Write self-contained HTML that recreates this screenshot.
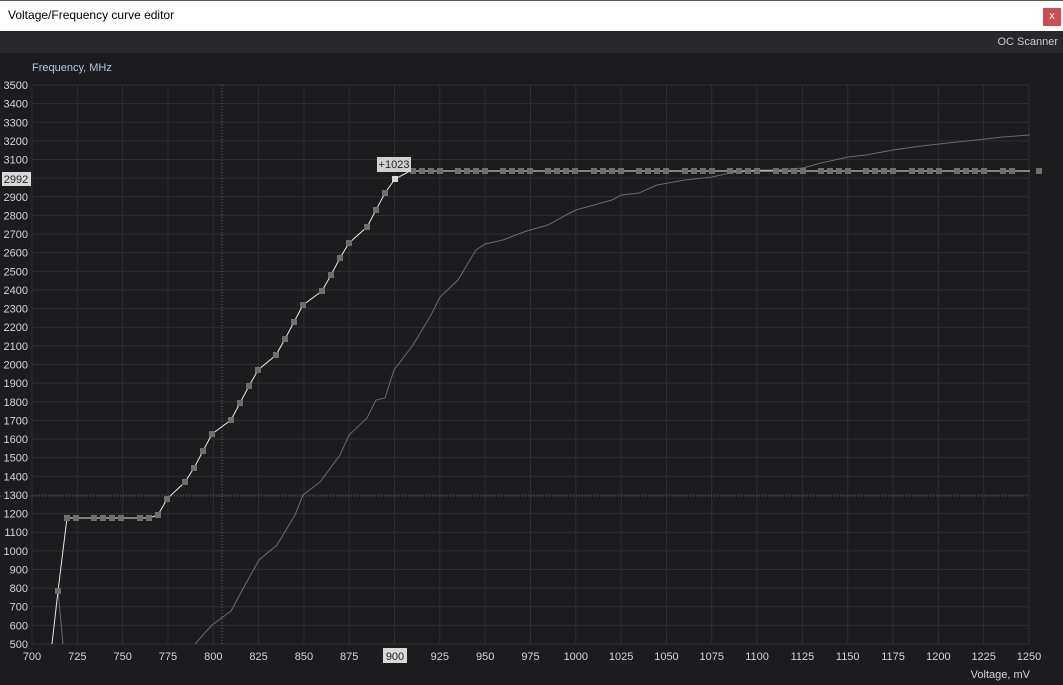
<!DOCTYPE html><html><head><style>
body{margin:0;width:1063px;height:685px;overflow:hidden;background:#1c1c1f;font-family:"Liberation Sans",sans-serif;}
#t{position:absolute;left:0;top:0;width:1063px;height:31px;background:#fff;border-top:1px solid #555;box-sizing:border-box}
#t span{position:absolute;left:8px;top:7px;font-size:12px;color:#000}
#x{position:absolute;right:2px;top:7px;width:18px;height:18px;background:#c85050;color:#fff;font-size:11px;text-align:center;line-height:17px}
#b{position:absolute;left:0;top:31px;width:1063px;height:22px;background:#28282c}
#b span{position:absolute;right:5px;top:5px;font-size:11px;color:#c8ccd4}
svg{position:absolute;left:0;top:53px}
</style></head><body>
<div id="t"><span>Voltage/Frequency curve editor</span><div id="x">x</div></div>
<div id="b"><span>OC Scanner</span></div>
<svg width="1063" height="632" viewBox="0 53 1063 632" font-family="Liberation Sans" font-size="11" id="s"></svg>
<script>
var s=document.getElementById('s'),h='';
function px(v){return 32+(v-700)*997/550}function py(f){return 644-(f-500)*559/3000}
for(var v=700;v<=1250;v+=25){var x=px(v);h+='<line x1="'+x+'" y1="85" x2="'+x+'" y2="644" stroke="#2f2f33"/>';
if(v!=900)h+='<text x="'+x+'" y="660" fill="#d0d4dc" text-anchor="middle">'+v+'</text>';}
for(var f=500;f<=3500;f+=100){var y=py(f);h+='<line x1="32" y1="'+y+'" x2="1029" y2="'+y+'" stroke="#2f2f33"/>';
h+='<text x="28" y="'+(y+4)+'" fill="#d0d4dc" text-anchor="end">'+f+'</text>';}
h+='<text x="32" y="71" fill="#b8c4e0">Frequency, MHz</text><text x="1030" y="678" fill="#d0d4dc" text-anchor="end">Voltage, mV</text>';
h+='<line x1="222" y1="85" x2="222" y2="644" stroke="#666" stroke-dasharray="1,2"/><line x1="0" y1="496" x2="1029" y2="496" stroke="#666" stroke-dasharray="1,2"/>';
var g="195,644 212,625 231,611 245,585 259,560 277,545 295,515 303,495 320,482 340,455 349,435 367,418 376,400 385,398 394,370 413,345 431,315 440,297 458,280 476,250 485,244 503,240 521,233 530,230 548,225 566,215 576,210 594,205 612,200 621,195 639,193 657,185 685,180 712,177 730,173 758,170 776,170 803,168 821,163 848,157 866,155 893,150 921,146 948,143 976,140 1003,137 1030,135";
h+='<polyline points="'+g+'" fill="none" stroke="#6a6a6e"/><polyline points="58,590 63,644" fill="none" stroke="#6a6a6e"/>';
var p=[[58,591],[67,518],[76,518],[94,518],[103,518],[112,518],[121,518],[140,518],[149,518],[158,515],[167,499],[185,482],[194,468],[203,451],[212,434],[231,420],[240,403],[249,386],[258,370],[276,355],[285,339],[294,322],[303,305],[322,291],[331,275],[340,258],[349,243],[367,227],[376,210],[385,193],[395,179]];
var fl=[413,422,431,440,458,467,476,485,503,512,521,530,548,557,566,575,594,603,612,621,639,648,657,666,685,694,703,712,730,739,748,757,776,785,794,803,821,830,839,848,866,875,884,893,912,921,930,939,957,966,975,984,1003,1012,1039];
var pts='52,644 '+p.map(function(a){return a.join(',')}).join(' ')+' 410,171 1030,171';
h+='<polyline points="'+pts+'" fill="none" stroke="#e8e8e8"/>';
p.forEach(function(a,i){h+='<rect x="'+(a[0]-3)+'" y="'+(a[1]-3)+'" width="6" height="6" fill="'+(i==p.length-1?'#d8d8d8':'#6e6e6e')+'"/>'});
fl.forEach(function(x){h+='<rect x="'+(x-3)+'" y="168" width="6" height="6" fill="#6e6e6e"/>'});
h+='<rect x="377" y="157" width="34" height="15" fill="#d0d0d0"/><text x="394" y="168" fill="#222" text-anchor="middle">+1023</text>';
h+='<rect x="2" y="172" width="29" height="14" fill="#d8d8d8"/><text x="16" y="183" fill="#222" text-anchor="middle">2992</text>';
h+='<rect x="383" y="648" width="24" height="15" fill="#d8d8d8"/><text x="395" y="660" fill="#222" text-anchor="middle">900</text>';
s.innerHTML=h;
</script></body></html>
